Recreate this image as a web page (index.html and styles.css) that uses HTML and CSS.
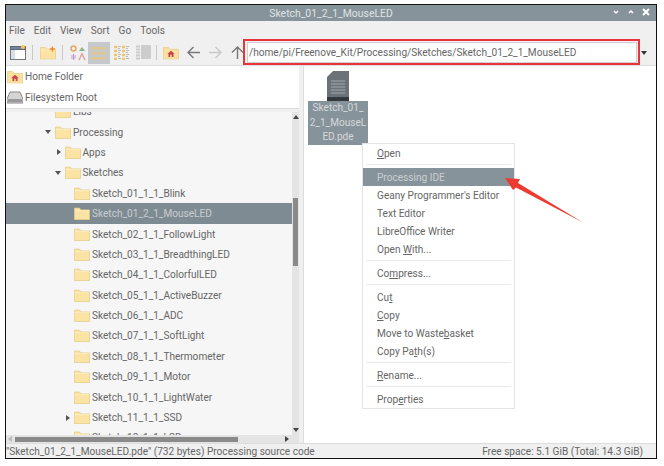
FILE: index.html
```html
<!DOCTYPE html>
<html>
<head>
<meta charset="UTF-8">
<title>Sketch_01_2_1_MouseLED</title>
<link rel="stylesheet" href="styles.css">
</head>
<body>
<svg class="defs" width="0" height="0">
  <symbol id="folder" viewBox="0 0 22 18">
    <path d="M0.5 1.5h7l2 2.5h12v13.5h-21z" fill="#fbe3a4" stroke="#e2c987"/>
    <path d="M1 5h20" stroke="#fdf0c8"/>
  </symbol>
  <symbol id="home" viewBox="0 0 22 18">
    <path d="M0.5 1.5h7l2 2.5h12v13.5h-21z" fill="#fbe0a0" stroke="#e2c987"/>
    <path d="M11 6l-5 4.500h1.500v4h2.500v-3h2v3h2.500v-4h1.500z" fill="#c8434a"/>
  </symbol>
</svg>
<div class="window">
  <div class="titlebar">
    <span class="title">Sketch_01_2_1_MouseLED</span>
    <div class="wm-buttons">
      <svg width="10" height="10" viewBox="0 0 10 10"><path d="M3 4l2 2 2-2" fill="none" stroke="#fff" stroke-width="1.500"/></svg>
      <svg width="10" height="10" viewBox="0 0 10 10"><path d="M3 6l2-2 2 2" fill="none" stroke="#fff" stroke-width="1.500"/></svg>
      <svg width="10" height="10" viewBox="0 0 10 10"><path d="M2 2l6 6M8 2l-6 6" fill="none" stroke="#fff" stroke-width="2"/></svg>
    </div>
  </div>
  <div class="menubar">
    <span>File</span><span>Edit</span><span>View</span><span>Sort</span><span>Go</span><span>Tools</span>
  </div>
  <div class="toolbar">
    <svg class="tool first" width="16" height="15" viewBox="0 0 16 15">
      <rect x="0.500" y="1.500" width="15" height="13" fill="#fff" stroke="#777"/>
      <rect x="0.500" y="1.500" width="15" height="3" fill="#6f86a8" stroke="#666"/>
      <rect x="1" y="5" width="4" height="9" fill="#d7dee6"/>
      <circle cx="13" cy="2" r="2" fill="#f4c94f"/>
    </svg>
    <i class="sep"></i>
    <svg class="tool" width="16" height="14" viewBox="0 0 22 18"><use href="#folder"/><path d="M17 0v7M13.500 3.500h7" stroke="#ef8a2c" stroke-width="2"/></svg>
    <i class="sep"></i>
    <svg class="tool" width="16" height="16" viewBox="0 0 16 16">
      <circle cx="3.500" cy="3.500" r="2.500" fill="none" stroke="#e8a56a" stroke-width="1.500"/>
      <path d="M9 6l3-4 3 4z" fill="#8ab58a"/>
      <path d="M3.500 9v6M1 11h5M1 13h5" stroke="#c09ad2"/>
      <path d="M9 15l3-6 3 6" fill="none" stroke="#e0a0a0" stroke-width="1.500"/>
    </svg>
    <span class="view-btn active">
      <svg width="14" height="14" viewBox="0 0 14 14" fill="#eec56a"><rect x="0" y="1" width="3" height="2.500"/><rect x="5" y="1" width="3" height="2.500"/><rect x="10" y="1" width="3" height="2.500"/><rect x="0" y="6" width="3" height="2.500"/><rect x="5" y="6" width="3" height="2.500"/><rect x="10" y="6" width="3" height="2.500"/><rect x="0" y="11" width="3" height="2.500"/><rect x="5" y="11" width="3" height="2.500"/><rect x="10" y="11" width="3" height="2.500"/></svg>
    </span>
    <span class="view-btn">
      <svg width="15" height="15" viewBox="0 0 15 15"><path d="M0 2h3M0 6h3M0 10h3M0 14h3M8 2h3M8 6h3M8 10h3M8 14h3" stroke="#eec56a" stroke-width="2.500"/><path d="M4 1.500h3M4 3.500h2M4 5.500h3M4 7.500h2M4 9.500h3M4 11.500h2M4 13.500h3M12 1.500h3M12 3.500h2M12 5.500h3M12 7.500h2M12 9.500h3M12 11.500h2M12 13.500h3" stroke="#bbb"/></svg>
    </span>
    <span class="view-btn">
      <svg width="15" height="15" viewBox="0 0 15 15"><path d="M0 1.500h4M0 4.500h4M0 7.500h4M0 10.500h4M0 13.500h4" stroke="#ccc" stroke-width="2"/><path d="M5 1h10M5 3h10M5 5h10M5 7h10M5 9h10M5 11h10M5 13h10" stroke="#aaa"/></svg>
    </span>
    <i class="sep tight"></i>
    <svg class="tool" width="16" height="14" viewBox="0 0 22 18"><use href="#home"/></svg>
    <svg class="tool arrow" width="15" height="15" viewBox="0 0 15 15"><path d="M14 7.500H2M7.500 2L2 7.500 7.500 13" fill="none" stroke="#777" stroke-width="1.400"/></svg>
    <svg class="tool arrow" width="15" height="15" viewBox="0 0 15 15"><path d="M1 7.500h12M7.500 2L13 7.500 7.500 13" fill="none" stroke="#c9c9c9" stroke-width="1.400"/></svg>
    <svg class="tool arrow" width="15" height="15" viewBox="0 0 15 15"><path d="M7.500 14V2M2 7.500L7.500 2 13 7.500" fill="none" stroke="#777" stroke-width="1.400"/></svg>
    <div class="location">/home/pi/Freenove_Kit/Processing/Sketches/Sketch_01_2_1_MouseLED</div>
    <span class="caret"></span>
  </div>
  <div class="panes">
    <div class="side">
      <div class="places">
        <div class="place"><svg width="16" height="14" viewBox="0 0 22 18"><use href="#home"/></svg>Home Folder</div>
        <div class="place">
          <svg width="16" height="13" viewBox="0 0 16 13"><path d="M3 1h10l3 7v4H0V8z" fill="#d5d5d5" stroke="#888"/><rect x="1" y="8" width="14" height="3" fill="#999"/></svg>Filesystem Root
        </div>
      </div>
      <div class="tree-area">
        <div class="tree-row-wrap">
          <div class="tree">
            <div class="tree-inner">
              <div class="row lv1"><i class="ex"></i><svg class="fld"><use href="#folder"/></svg>Libs</div>
              <div class="row lv1"><i class="ex open"></i><svg class="fld"><use href="#folder"/></svg>Processing</div>
              <div class="row lv2"><i class="ex closed"></i><svg class="fld"><use href="#folder"/></svg>Apps</div>
              <div class="row lv2"><i class="ex open"></i><svg class="fld"><use href="#folder"/></svg>Sketches</div>
              <div class="row lv3"><i class="ex"></i><svg class="fld"><use href="#folder"/></svg>Sketch_01_1_1_Blink</div>
              <div class="row lv3 sel"><i class="ex"></i><svg class="fld"><use href="#folder"/></svg>Sketch_01_2_1_MouseLED</div>
              <div class="row lv3"><i class="ex"></i><svg class="fld"><use href="#folder"/></svg>Sketch_02_1_1_FollowLight</div>
              <div class="row lv3"><i class="ex"></i><svg class="fld"><use href="#folder"/></svg>Sketch_03_1_1_BreadthingLED</div>
              <div class="row lv3"><i class="ex"></i><svg class="fld"><use href="#folder"/></svg>Sketch_04_1_1_ColorfulLED</div>
              <div class="row lv3"><i class="ex"></i><svg class="fld"><use href="#folder"/></svg>Sketch_05_1_1_ActiveBuzzer</div>
              <div class="row lv3"><i class="ex"></i><svg class="fld"><use href="#folder"/></svg>Sketch_06_1_1_ADC</div>
              <div class="row lv3"><i class="ex"></i><svg class="fld"><use href="#folder"/></svg>Sketch_07_1_1_SoftLight</div>
              <div class="row lv3"><i class="ex"></i><svg class="fld"><use href="#folder"/></svg>Sketch_08_1_1_Thermometer</div>
              <div class="row lv3"><i class="ex"></i><svg class="fld"><use href="#folder"/></svg>Sketch_09_1_1_Motor</div>
              <div class="row lv3"><i class="ex"></i><svg class="fld"><use href="#folder"/></svg>Sketch_10_1_1_LightWater</div>
              <div class="row lv3"><i class="ex closed"></i><svg class="fld"><use href="#folder"/></svg>Sketch_11_1_1_SSD</div>
              <div class="row lv3"><i class="ex"></i><svg class="fld"><use href="#folder"/></svg>Sketch_12_1_1_LCD</div>
            </div>
          </div>
          <div class="vscroll">
            <i class="up"></i>
            <div class="track"><div class="thumb"></div></div>
            <i class="down"></i>
          </div>
        </div>
        <div class="hscroll">
          <i class="left"></i>
          <div class="hthumb"></div>
          <i class="right"></i>
        </div>
      </div>
    </div>
    <div class="main">
      <div class="file">
        <svg class="doc" width="22" height="30" viewBox="0 0 22 30">
          <path d="M6 0h16v30H0V6z" fill="#6b7278"/>
          <path d="M0 26h22v4H0z" fill="#33383c"/>
          <path d="M4 10h14M4 13h14M4 16h14M4 19h14M4 22h14" stroke="#a3a9ad"/>
        </svg>
        <div class="file-label">Sketch_01_<br>2_1_MouseL<br>ED.pde</div>
      </div>
    </div>
  </div>
  <div class="statusbar">
    <span>"Sketch_01_2_1_MouseLED.pde" (732 bytes) Processing source code</span>
    <span>Free space: 5.1 GiB (Total: 14.3 GiB)</span>
  </div>

  <div class="addr-mark"></div>
  <ul class="menu">
    <li><u>O</u>pen</li>
    <li class="div"></li>
    <li class="hl">Processing IDE</li>
    <li>Geany Programmer's Editor</li>
    <li>Text Editor</li>
    <li>LibreOffice Writer</li>
    <li>Open <u>W</u>ith...</li>
    <li class="div"></li>
    <li>Co<u>m</u>press...</li>
    <li class="div"></li>
    <li>Cu<u>t</u></li>
    <li><u>C</u>opy</li>
    <li>Move to Waste<u>b</u>asket</li>
    <li>Copy Pa<u>t</u>h(s)</li>
    <li class="div"></li>
    <li><u>R</u>ename...</li>
    <li class="div"></li>
    <li>Prop<u>e</u>rties</li>
  </ul>
  <svg class="pointer" width="84" height="50" viewBox="0 0 84 50"><path d="M1 1L16 2 14 6 79 45.500 12 10.500 9 13z" fill="#ee3b32"/></svg>
</div>
</body>
</html>
```

FILE: styles.css
```css
* {
    box-sizing: border-box;
}
html, body {
    margin: 0;
    height: 100%;
    background: #fff;
}
body {
    font: 10.100px Roboto, "Liberation Sans", sans-serif;
    color: #666;
    padding: 4px 7px 0 5px;
    overflow: hidden;
}
.defs {
    position: absolute;
}
.window {
    position: relative;
    width: 652px;
    height: 455px;
    border: 1px solid #111;
    background: #f0f0f0;
    display: flex;
    flex-direction: column;
}
.titlebar {
    height: 16px;
    background: #87939a;
    color: #dfe3e5;
    font-size: 10.400px;
    display: flex;
    align-items: center;
    justify-content: center;
    flex: none;
    position: relative;
}
.wm-buttons {
    position: absolute;
    right: 5px;
    top: 2px;
    display: flex;
    gap: 5px;
}
.menubar {
    height: 19px;
    flex: none;
    display: flex;
    align-items: center;
    gap: 9px;
    padding-left: 3px;
}
.toolbar {
    height: 26px;
    flex: none;
    display: flex;
    align-items: center;
    padding-left: 4px;
    border-bottom: 1px solid #ddd;
}
.tool {
    flex: none;
}
.tool.arrow {
    margin-left: 7px;
}
.sep {
    width: 1px;
    height: 15px;
    background: #c8c8c8;
    margin: 0 7px 0 6px;
    flex: none;
}
.sep.tight {
    margin-left: 2px;
    margin-right: 6px;
}
.view-btn {
    width: 22px;
    height: 22px;
    display: flex;
    align-items: center;
    justify-content: center;
    flex: none;
}
.view-btn.active {
    background: #c6c9cb;
    margin-left: 2px;
}
.location {
    width: 390px;
    height: 21px;
    margin-left: 2px;
    flex: none;
    background: #fff;
    border: 1px solid #d0d0d0;
    padding-left: 1px;
    line-height: 19px;
    white-space: nowrap;
}
.caret {
    width: 0;
    height: 0;
    margin-left: 4px;
    border: 3px solid transparent;
    border-top: 4px solid #333;
    border-bottom: 0;
}
.panes {
    flex: 1;
    min-height: 0;
    display: flex;
}
.side {
    width: 293px;
    flex: none;
    display: flex;
    flex-direction: column;
    gap: 3px;
}
.places {
    height: 43px;
    flex: none;
    background: #fff;
    border-bottom: 1px solid #ddd;
}
.place {
    height: 21px;
    display: flex;
    align-items: center;
    gap: 2px;
    padding-left: 1px;
}
.tree-area {
    flex: 1;
    min-height: 0;
    display: flex;
    flex-direction: column;
}
.tree-row-wrap {
    flex: 1;
    min-height: 0;
    display: flex;
}
.tree {
    flex: 1;
    overflow: hidden;
    background: #f6f6f6;
}
.tree-inner {
    margin-top: -10.500px;
}
.row {
    height: 20.400px;
    display: flex;
    align-items: center;
    white-space: nowrap;
}
.lv1 {
    padding-left: 39px;
}
.lv2 {
    padding-left: 48.500px;
}
.lv3 {
    padding-left: 58px;
}
.row.sel {
    background: #7f8b93;
    color: #c8cdd0;
}
.ex {
    width: 10px;
    height: 10px;
    flex: none;
    position: relative;
}
.ex.open::before {
    content: "";
    position: absolute;
    left: 0;
    top: 3px;
    border: 3px solid transparent;
    border-top: 4px solid #555;
    border-bottom: 0;
}
.ex.closed::before {
    content: "";
    position: absolute;
    left: 2px;
    top: 2px;
    border: 3px solid transparent;
    border-left: 4px solid #555;
    border-right: 0;
}
.fld {
    width: 16px;
    height: 13px;
    margin-right: 2px;
    flex: none;
}
.vscroll {
    width: 7px;
    flex: none;
    background: #e4e4e4;
    display: flex;
    flex-direction: column;
    align-items: center;
}
.track {
    flex: 1;
    width: 100%;
    padding-top: 76px;
}
.thumb {
    width: 5px;
    height: 68px;
    margin-left: 1px;
    background: #8a8a8a;
}
.up, .down {
    width: 0;
    height: 0;
    margin: 3px 0;
    border: 3px solid transparent;
    flex: none;
}
.up {
    border-bottom: 4px solid #444;
    border-top: 0;
}
.down {
    border-top: 4px solid #444;
    border-bottom: 0;
}
.hscroll {
    height: 8px;
    flex: none;
    background: #e4e4e4;
    display: flex;
    align-items: center;
    padding: 0 2px;
}
.left {
    width: 0;
    height: 0;
    border: 3px solid transparent;
    border-right: 4px solid #bbb;
    border-left: 0;
    margin-right: 3px;
}
.right {
    width: 0;
    height: 0;
    border: 3px solid transparent;
    border-left: 4px solid #444;
    border-right: 0;
    margin-left: 47px;
}
.hthumb {
    width: 223px;
    height: 5px;
    background: #8a8a8a;
}
.main {
    flex: 1;
    margin-left: 4px;
    background: #fff;
    border-left: 1px solid #ddd;
    padding: 5px 0 0 4px;
}
.file {
    width: 60px;
    display: flex;
    flex-direction: column;
    align-items: center;
}
.doc {
    flex: none;
}
.file-label {
    width: 100%;
    background: #87939a;
    color: #d5d9db;
    text-align: center;
    line-height: 14.500px;
    height: 44px;
    white-space: nowrap;
    overflow: hidden;
}
.statusbar {
    height: 15px;
    flex: none;
    display: flex;
    justify-content: space-between;
    align-items: center;
    padding: 0 13px 0 0;
    border-top: 1px solid #ddd;
    background: #f0f0f0;
}
.addr-mark {
    position: absolute;
    left: 237px;
    top: 34px;
    width: 397px;
    height: 26px;
    border: 2px solid #e8343c;
}
.menu {
    position: absolute;
    left: 356px;
    top: 138px;
    width: 153px;
    margin: 0;
    padding: 0;
    list-style: none;
    background: #fff;
    border: 1px solid #e4e4e4;
}
.menu li {
    height: 18px;
    line-height: 20px;
    padding-left: 14px;
}
.menu li.hl {
    background: #87939a;
    color: #c9ced1;
}
.menu li.div {
    height: 1px;
    margin: 2px 3px 3px;
    background: #eaeaea;
}
.pointer {
    position: absolute;
    left: 498px;
    top: 172px;
}
```
